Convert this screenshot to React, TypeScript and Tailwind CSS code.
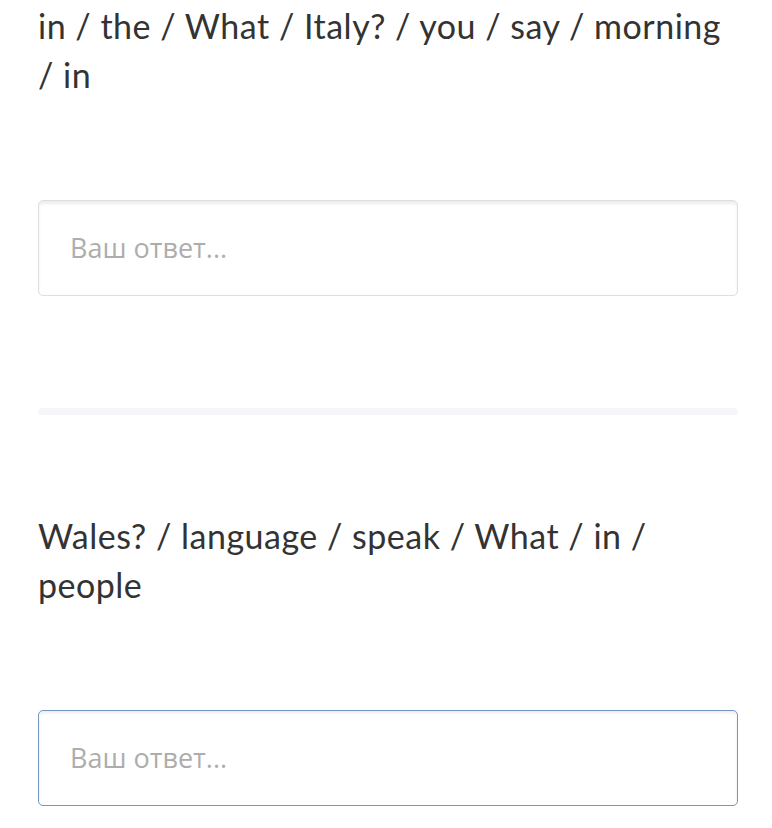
import React from "react";

const questions = [
  { text: "in / the / What / Italy? / you / say / morning / in", focused: false },
  { text: "Wales? / language / speak / What / in / people", focused: true },
];

function Question({ text, focused }: { text: string; focused: boolean }) {
  return (
    <div className="flex flex-col">
      <p className="pr-[10px] text-[34px] leading-[49px] tracking-[0.5px] text-[#333333]">{text}</p>
      <div
        className={
          "mt-[101px] h-[96px] rounded-[5px] border bg-white flex items-center px-[31px] " +
          (focused
            ? "border-[#7596c4] shadow-[inset_0_2px_3px_rgba(0,0,0,0.08)]"
            : "border-[#dedede] shadow-[inset_0_3px_3px_rgba(0,0,0,0.07)]")
        }
      >
        <input
          placeholder="Ваш ответ..."
          className="w-full bg-transparent outline-none text-[27px] text-[#333] placeholder:text-[#adadad] font-['Open_Sans',sans-serif]"
        />
      </div>
    </div>
  );
}

export default function App() {
  return (
    <div className="min-h-[828px] w-[772px] bg-white pl-[38px] pr-[34px] font-['Lato','Noto_Sans',sans-serif]">
      <div className="pt-[1px]">
        <Question {...questions[0]} />
      </div>
      <div className="mt-[112px] h-[7px] rounded-full bg-[#f6f6fa]" />
      <div className="pt-[96px]">
        <Question {...questions[1]} />
      </div>
    </div>
  );
}
